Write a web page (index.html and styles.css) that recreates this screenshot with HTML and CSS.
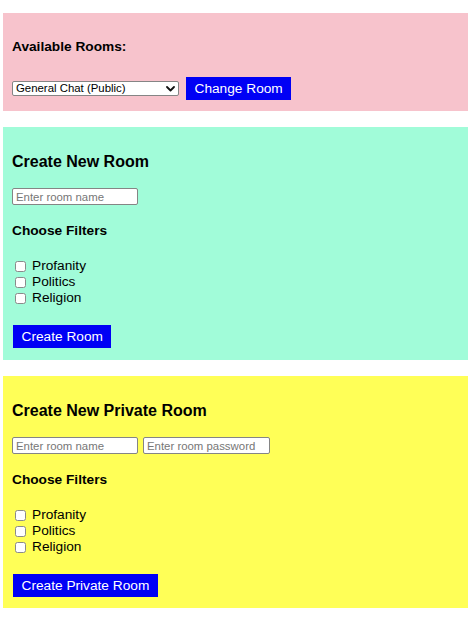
FILE: index.html
```html
<!DOCTYPE html>
<html lang="en">
<head>
<meta charset="utf-8">
<title>Chat Rooms</title>
<link rel="stylesheet" href="styles.css">
</head>
<body>
<main class="page">
  <section class="panel panel-rooms">
    <h4 class="label-heading">Available Rooms:</h4>
    <div class="room-row">
      <div class="select-wrap">
        <select class="room-select">
          <option>General Chat (Public)</option>
        </select>
        <svg class="chevron" width="9" height="6" viewBox="0 0 9 6" aria-hidden="true"><path d="M1 1l3.5 3.5L8 1" fill="none" stroke="#111" stroke-width="1.8" stroke-linecap="round" stroke-linejoin="round"/></svg>
      </div>
      <button class="btn">Change Room</button>
    </div>
  </section>

  <section class="panel panel-new">
    <h3 class="title">Create New Room</h3>
    <div class="inputs">
      <input class="field" type="text" placeholder="Enter room name">
    </div>
    <h4 class="label-heading filters-heading">Choose Filters</h4>
    <ul class="filters">
      <li><label><input type="checkbox" class="check"><span>Profanity</span></label></li>
      <li><label><input type="checkbox" class="check"><span>Politics</span></label></li>
      <li><label><input type="checkbox" class="check"><span>Religion</span></label></li>
    </ul>
    <button class="btn btn-create">Create Room</button>
  </section>

  <section class="panel panel-private">
    <h3 class="title">Create New Private Room</h3>
    <div class="inputs">
      <input class="field" type="text" placeholder="Enter room name">
      <input class="field field-pass" type="password" placeholder="Enter room password">
    </div>
    <h4 class="label-heading filters-heading">Choose Filters</h4>
    <ul class="filters">
      <li><label><input type="checkbox" class="check"><span>Profanity</span></label></li>
      <li><label><input type="checkbox" class="check"><span>Politics</span></label></li>
      <li><label><input type="checkbox" class="check"><span>Religion</span></label></li>
    </ul>
    <button class="btn btn-create">Create Private Room</button>
  </section>
</main>
</body>
</html>
```

FILE: styles.css
```css
* { box-sizing: border-box; }

html, body {
  margin: 0;
  padding: 0;
  background: #ffffff;
}

body {
  font-family: "Liberation Sans", Arial, Helvetica, sans-serif;
  color: #000;
  font-size: 13.7px;
}

.page {
  display: flex;
  flex-direction: column;
  gap: 16px;
  padding: 13px 6px 0 3px;
}

.panel {
  padding: 0 9px;
}

.panel-rooms {
  background: #f7c3cc;
  padding-top: 26px;
  padding-bottom: 11px;
}

.panel-new {
  background: #a1fcd9;
  padding-top: 25px;
  padding-bottom: 12px;
}

.panel-private {
  background: #ffff57;
  padding-top: 25px;
  padding-bottom: 11px;
}

.label-heading {
  margin: 0;
  font-size: 13.7px;
  line-height: 16px;
  font-weight: bold;
}

.title {
  margin: 0;
  font-size: 16px;
  line-height: 19px;
  font-weight: bold;
}

.room-row {
  display: flex;
  align-items: center;
  gap: 7px;
  margin-top: 22px;
}

.select-wrap {
  position: relative;
  width: 167px;
  height: 15px;
}

.room-select {
  appearance: none;
  -webkit-appearance: none;
  display: block;
  width: 100%;
  height: 15px;
  margin: 0;
  padding: 0 0 0 3px;
  border: 1px solid #858585;
  border-radius: 2px;
  background: #fff;
  font-family: "Liberation Sans", Arial, sans-serif;
  font-size: 11.4px;
  line-height: 13px;
  color: #000;
}

.chevron {
  position: absolute;
  right: 4px;
  top: 5px;
  pointer-events: none;
}

.btn {
  margin: 0;
  border: 0;
  background: #0000f5;
  color: #fff;
  font-family: "Liberation Sans", Arial, sans-serif;
  font-size: 13.7px;
  line-height: 16px;
  height: 23px;
  padding: 0 8.5px;
  cursor: pointer;
}

.inputs {
  display: flex;
  gap: 5px;
  margin-top: 17px;
}

.field {
  width: 126px;
  height: 17px;
  margin: 0;
  padding: 0 3px;
  border: 1px solid #858585;
  border-radius: 2px;
  background: #fff;
  font-family: "Liberation Sans", Arial, sans-serif;
  font-size: 11.4px;
  color: #000;
}

.field-pass {
  width: 127px;
}

.field::placeholder {
  color: #767676;
}

.filters-heading {
  margin-top: 18px;
}

.filters {
  list-style: none;
  margin: 19px 0 0;
  padding: 0;
}

.filters li {
  height: 16px;
}

.filters label {
  display: flex;
  align-items: center;
  height: 16px;
  font-size: 13.7px;
  line-height: 16px;
}

.check {
  appearance: none;
  -webkit-appearance: none;
  width: 11px;
  height: 11px;
  margin: 0 6px 0 3px;
  border: 1px solid #8a8a8a;
  border-radius: 2.5px;
  background: #fff;
  flex: none;
}

.btn-create {
  display: block;
  margin-top: 19px;
  margin-left: 1px;
}
```
